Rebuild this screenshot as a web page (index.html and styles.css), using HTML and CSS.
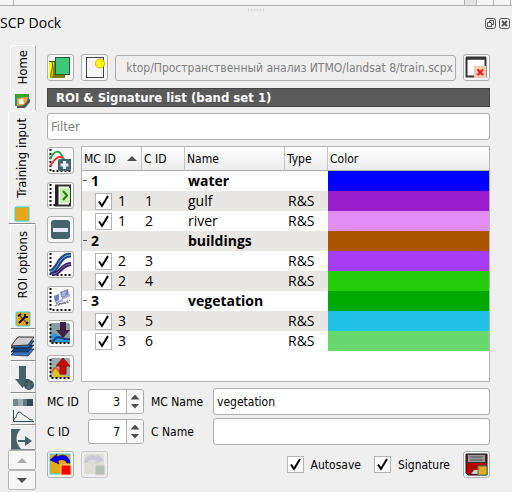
FILE: index.html
```html
<!DOCTYPE html>
<html lang="en">
<head>
<meta charset="utf-8">
<title>SCP Dock</title>
<link rel="stylesheet" href="styles.css">
</head>
<body>
<div class="strip"><span class="strip-left"></span><span class="strip-cell shade"></span><span class="strip-cell"></span><span class="strip-cell"></span></div>
<div class="grip">
  <svg width="16" height="2" viewBox="0 0 16 2"><path d="M0 1H16" stroke="#b4b4b4" stroke-width="1" stroke-dasharray="1 2"/></svg>
</div>
<header class="title">
  <h1>SCP Dock</h1>
  <button class="dock-btn" aria-label="Float"><svg width="11" height="11" viewBox="0 0 11 11" fill="none" stroke="#555"><rect x=".5" y=".5" width="10" height="10" rx="2"/><path d="M4.500 4V2.500H8.500V6.500H7M2.500 4.500H6.500V8.500H2.500Z"/></svg></button>
  <button class="dock-btn" aria-label="Close"><svg width="11" height="11" viewBox="0 0 11 11" fill="none" stroke="#555"><rect x=".5" y=".5" width="10" height="10" rx="2"/><path d="M3 3L8 8M8 3L3 8" stroke-width="2"/></svg></button>
</header>
<div class="dock">
  <nav class="tabs">
    <button class="tab home"><span class="tab-text">Home</span>
      <svg width="16" height="16" viewBox="0 0 16 16"><path d="M2 15V5L15 6V9L10 15Z" fill="#555"/><path d="M0 1H14V7H11L8 13H0Z" fill="#13997b"/><path d="M0 1H14V4H0Z" fill="#33a522"/><path d="M2 5L13 4L12 8L9 12L2 13Z" fill="#f3a33c"/><path d="M4 7L8 5L9 11H4Z" fill="#fff"/></svg></button>
    <button class="tab training"><span class="tab-text">Training input</span>
      <svg width="16" height="16" viewBox="0 0 16 16"><rect x="1" y="1" width="14" height="14" rx="1" fill="#e8a817" stroke="#30d0e0"/></svg></button>
    <button class="tab options"><span class="tab-text">ROI options</span>
      <svg width="16" height="16" viewBox="0 0 16 16"><rect x="1" y="1" width="14" height="14" rx="1" fill="#e8a817" stroke="#30d0e0"/><path d="M4 4L12 12" stroke="#555" stroke-width="1.500"/><path d="M11 5L4 12" stroke="#111" stroke-width="2"/><path d="M3 5L6 3M10 3V6H13M11 13L13 11" stroke="#111" stroke-width="2" fill="none"/></svg></button>
    <button class="tab short" aria-label="Band set">
      <svg width="24" height="24" viewBox="0 0 24 24"><path d="M0 21L6 15H23L17 22Z" fill="#3873c4" stroke="#123" stroke-width=".7"/><path d="M0 18L6 11H23L17 18Z" fill="#17457f" stroke="#123" stroke-width=".7"/><path d="M0 14L6 7H23L17 14Z" fill="#2a68b0" stroke="#123"/><path d="M0 12L6 4Q8 2 10 3H23L17 11Z" fill="#ccc" stroke="#333"/></svg></button>
    <button class="tab short" aria-label="Download">
      <svg width="24" height="24" viewBox="0 0 24 24"><path d="M8 0H15V13H19L11.500 22L4 13H8Z" fill="#46636a"/><circle cx="18" cy="19" r="5" fill="#3a5157"/><path d="M14 18H22M15 21H21M18 15V23" stroke="#5f7980"/></svg></button>
    <button class="tab short" aria-label="Spectral plot">
      <svg width="24" height="26" viewBox="0 0 24 26"><path d="M2 1H7V8H2Z" fill="#72898e"/><path d="M7 1H12V8H7Z" fill="#9aaeb2"/><path d="M12 1H16V8H12Z" fill="#61787e"/><path d="M16 1H22V8H16Z" fill="#334b52"/><path d="M2.500 12V23.500H23" stroke="#334b52" fill="none"/><path d="M3 21C6 21 5 14 8 14C11 14 11 17 14 18S17 22 22 22" stroke="#334b52" fill="none"/></svg></button>
    <button class="tab short last" aria-label="Export">
      <svg width="24" height="21" viewBox="0 0 24 21"><path d="M0 1H10C4 6 4 15 10 21H0Z" fill="#46636a"/><path d="M7 13H15" stroke="#46636a" stroke-width="2"/><path d="M14 8L21 13L14 18Z" fill="#46636a"/></svg></button>
    <button class="scroll" aria-label="Scroll up"><svg width="10" height="5" viewBox="0 0 10 5"><path d="M5 0L10 5H0Z" fill="#aaa"/></svg></button>
    <button class="scroll" aria-label="Scroll down"><svg width="10" height="5" viewBox="0 0 10 5"><path d="M5 5L10 0H0Z" fill="#505050"/></svg></button>
  </nav>
  <main class="panel">
    <div class="row file-row">
      <button class="tool" aria-label="Open training input"><svg width="23" height="23" viewBox="0 0 23 23"><path d="M0 6H16V22H0Z" fill="#7d7a00"/><path d="M0 6H5L3 22H0Z" fill="#ffff00"/><path d="M0 5.500H8M3 6C5 12 1 16 2 22" stroke="#4b4a00" fill="none"/><rect x="6.500" y="1.500" width="14" height="17" fill="#3cc878" stroke="#2c5540"/></svg></button>
      <button class="tool wide-gap" aria-label="New training input"><svg width="23" height="23" viewBox="0 0 23 23"><rect x="3.500" y="1.500" width="17" height="20" fill="#f5f5f5" stroke="#444"/><circle cx="17" cy="7.500" r="4.500" fill="#ffff00" stroke="#d0b400"/></svg></button>
      <input class="field path" type="text" aria-label="Training input" disabled value="ktop/Пространственный анализ ИТМО/landsat 8/train.scpx">
      <button class="tool" aria-label="Reset"><svg width="23" height="23" viewBox="0 0 23 23"><rect x="1.500" y="2.500" width="19" height="18" fill="#fff" stroke="#333" stroke-width="2"/><path d="M1 2H21" stroke="#333" stroke-width="3"/><rect x="9" y="10" width="12" height="12" fill="#efcbb0"/><path d="M12.500 13.500L18 19M18 13.500L12.500 19" stroke="#ff1020" stroke-width="2"/></svg></button>
    </div>
    <h2>ROI &amp; Signature list (band set 1)</h2>
    <input class="field filter" type="text" placeholder="Filter" aria-label="Filter">
    <div class="list">
      <div class="tools">
        <button class="tool" aria-label="Merge signatures"><svg width="23" height="23" viewBox="0 0 23 23"><path d="M1.500 0V22H22" fill="none" stroke="#111" stroke-width="2" stroke-dasharray="2 2"/><path d="M1 10C5 2 10 0 13 7S19 10 22 11" stroke="#35a045" stroke-width="2" fill="none"/><path d="M1 17C6 10 9 6 14 9" stroke="#e83434" stroke-width="2" fill="none"/><rect x="9" y="10" width="13" height="12" rx="2" fill="#46636a"/><path d="M15.500 12V20M11.500 16H19.500" stroke="#e9eefb" stroke-width="3"/></svg></button>
        <button class="tool" aria-label="Calculate"><svg width="23" height="23" viewBox="0 0 23 23"><path d="M1.500 0V21H8" fill="none" stroke="#111" stroke-width="2" stroke-dasharray="2 2"/><rect x="7" y="1.500" width="14" height="20" fill="#f5f5f5" stroke="#333" stroke-width="2"/><rect x="11" y="4" width="10" height="15" fill="#c8eeb0"/><path d="M8 1V22" stroke="#222" stroke-width="3"/><path d="M14 7L18 11.500L14 16" stroke="#2b7810" stroke-width="2" fill="none"/></svg></button>
        <button class="tool" aria-label="Delete"><svg width="23" height="23" viewBox="0 0 23 23"><rect x="2" y="2" width="19" height="19" rx="3" fill="#46636a"/><rect x="4" y="10" width="15" height="4" fill="#e6e8fa"/></svg></button>
        <button class="tool" aria-label="Signature plot"><svg width="23" height="23" viewBox="0 0 23 23"><path d="M1.500 0V22H22" fill="none" stroke="#111" stroke-width="2" stroke-dasharray="2 2"/><path d="M1 19C10 17 9 2 22 2" stroke="#1d4a86" stroke-width="5" fill="none"/><path d="M1 19C10 17 9 2 22 2" stroke="#82b4d8" fill="none"/><path d="M3 21C12 21 11 12 22 11" stroke="#321a6b" stroke-width="4" fill="none"/><path d="M3 21C12 21 11 12 22 11" stroke="#8a78b8" fill="none"/></svg></button>
        <button class="tool" aria-label="Scatter plot"><svg width="23" height="23" viewBox="0 0 23 23"><path d="M1.500 0V22H22" fill="none" stroke="#111" stroke-width="2" stroke-dasharray="2 2"/><path d="M5 8L10 6V12L6 14Z" fill="#6b7ec0"/><path d="M11 4L19 1L20 8L13 11Z" fill="#7d83bf"/><path d="M13 4L17 3L16 8H13Z" fill="#a9b3e4"/><path d="M7 15L14 12M14 10L21 7" stroke="#a3a9d6" stroke-width="2"/><path d="M6 18L21 12M9 17L20 14M7 16L17 15" stroke="#6a6a78" stroke-dasharray="2 1"/></svg></button>
        <button class="tool" aria-label="Import signatures"><svg width="23" height="23" viewBox="0 0 23 23"><rect x="1" y="1" width="20" height="20" rx="2" fill="#879fa3"/><path d="M1.500 2V21H22" fill="none" stroke="#111" stroke-width="2" stroke-dasharray="2 2"/><path d="M3 20V13C6 8 8 15 11 14S16 18 21 19V20Z" fill="#2499dd"/><path d="M4 20C9 10 12 19 21 17" stroke="#163f80" stroke-width="2" fill="none"/><path d="M11 0H17V8H21L14 16L7 8H11Z" fill="#442044"/></svg></button>
        <button class="tool" aria-label="Export signatures"><svg width="23" height="23" viewBox="0 0 23 23"><rect x="1" y="1" width="20" height="20" rx="2" fill="#9aaaad"/><path d="M1.500 2V21H22" fill="none" stroke="#111" stroke-width="2" stroke-dasharray="2 2"/><path d="M3 20C5 9 8 13 10 16S17 19 21 20Z" fill="#dcc227"/><path d="M3 15C6 7 10 13 12 18" stroke="#f05a22" stroke-width="2" fill="none"/><path d="M14 1L21 9H17V17H11V9H7Z" fill="#c80b08" stroke="#851414"/></svg></button>
      </div>
      <div class="tree">
        <table>
          <colgroup><col class="c-mc"><col class="c-id"><col class="c-name"><col class="c-type"><col></colgroup>
          <thead><tr><th>MC ID<svg class="sort" width="10" height="5" viewBox="0 0 10 5"><path d="M5 0L10 5H0Z" fill="#505050"/></svg></th><th>C ID</th><th>Name</th><th>Type</th><th>Color</th></tr></thead>
          <tbody>
            <tr class="group"><td><i></i>1</td><td></td><td>water</td><td></td><td class="blue"></td></tr>
            <tr><td><label><input type="checkbox" checked>1</label></td><td>1</td><td>gulf</td><td>R&amp;S</td><td class="purple"></td></tr>
            <tr><td><label><input type="checkbox" checked>1</label></td><td>2</td><td>river</td><td>R&amp;S</td><td class="pink"></td></tr>
            <tr class="group"><td><i></i>2</td><td></td><td>buildings</td><td></td><td class="brown"></td></tr>
            <tr><td><label><input type="checkbox" checked>2</label></td><td>3</td><td></td><td>R&amp;S</td><td class="violet"></td></tr>
            <tr><td><label><input type="checkbox" checked>2</label></td><td>4</td><td></td><td>R&amp;S</td><td class="lime"></td></tr>
            <tr class="group"><td><i></i>3</td><td></td><td>vegetation</td><td></td><td class="green"></td></tr>
            <tr><td><label><input type="checkbox" checked>3</label></td><td>5</td><td></td><td>R&amp;S</td><td class="cyan"></td></tr>
            <tr><td><label><input type="checkbox" checked>3</label></td><td>6</td><td></td><td>R&amp;S</td><td class="mint"></td></tr>
          </tbody>
        </table>
      </div>
    </div>
    <div class="form">
      <label for="mc">MC ID</label>
      <div class="spin"><input id="mc" type="number" value="3"><span class="steps"><button aria-label="Increase MC ID"></button><button class="down" aria-label="Decrease MC ID"></button></span></div>
      <label for="mcname">MC Name</label>
      <input class="field" id="mcname" type="text" value="vegetation">
      <label for="cid">C ID</label>
      <div class="spin"><input id="cid" type="number" value="7"><span class="steps"><button aria-label="Increase C ID"></button><button class="down" aria-label="Decrease C ID"></button></span></div>
      <label for="cname">C Name</label>
      <input class="field" id="cname" type="text">
    </div>
    <div class="row foot">
      <button class="tool" aria-label="Undo"><svg width="23" height="23" viewBox="0 0 23 23"><rect x="1" y="1" width="20" height="20" fill="#e8a817" stroke="#30d0e0"/><path d="M1 7L8 1V4C15 0 20 3 21 10H18C16 6 12 6 9 8L10 11Z" fill="#0000fa" stroke="#10104a" stroke-width=".6"/><rect x="12" y="12" width="10" height="10" fill="#f00" stroke="#ffd080"/></svg></button>
      <button class="tool off" disabled aria-label="Redo"><svg width="23" height="23" viewBox="0 0 23 23"><rect x="1" y="1" width="20" height="20" fill="#dddcd5"/><path d="M21 7L14 1V4C7 0 2 3 1 10H4C6 6 10 6 13 8L12 11Z" fill="#c9c9d5"/><rect x="12" y="12" width="10" height="10" fill="#b4bfb6" stroke="#e4e4e0"/></svg></button>
      <label class="check push"><input type="checkbox" checked>Autosave</label>
      <label class="check"><input type="checkbox" checked>Signature</label>
      <button class="tool" aria-label="Save ROI"><svg width="23" height="23" viewBox="0 0 23 23"><path d="M1 1H22V22H3L1 20Z" fill="#b00000" stroke="#111"/><rect x="2.500" y="1.500" width="18" height="8" fill="#999" stroke="#333"/><path d="M5 4H18M5 7H18" stroke="#555"/><path d="M6 21L9 17H14V21Z" fill="#ccc"/><rect x="13" y="13" width="9" height="9" fill="#e8a817" stroke="#308080"/></svg></button>
    </div>
  </main>
</div>
</body>
</html>
```

FILE: styles.css
```css
* { box-sizing: border-box; }
body {
  margin: 0;
  background: #efefef;
  color: #000;
  font: 12px/16px "DejaVu Sans Condensed", "DejaVu Sans", sans-serif;
}
button, input { font: inherit; color: inherit; margin: 0; padding: 0; }
button { border: 0; background: none; }
svg { display: block; flex: none; }

.strip { display: flex; height: 6px; background: #f5f5f5; border-bottom: 1px solid #b2b2b2; padding-right: 1px; }
.strip-left { width: 14px; border-right: 1px solid #b2b2b2; margin-right: auto; }
.strip-cell { width: 17px; border-right: 1px solid #b2b2b2; }
.strip-cell.shade { width: 13px; background: #e3e3e3; border-left: 1px solid #b2b2b2; }
.grip { display: flex; justify-content: center; padding: 3px 0 4px; }
.title { display: flex; align-items: center; gap: 3px; height: 16px; padding-right: 2px; }
h1 { flex: 1; margin: 0; font: 14px/16px "Open Sans", "Noto Sans", sans-serif; }
.dock-btn { width: 11px; height: 11px; }

.dock { display: flex; align-items: flex-start; padding: 14px 22px 0 7px; }
.tabs { flex: none; display: flex; flex-direction: column; align-items: flex-end; width: 29px; }
.tab {
  display: flex; flex-direction: column; align-items: center; justify-content: flex-end; gap: 8px;
  width: 26px; padding-bottom: 1px; overflow: hidden;
  border: solid #fff; border-width: 1px 0 0 1px;
  border-right: 1px solid #b0b0b0; border-bottom: 1px solid #8c8c8c;
  border-top-left-radius: 3px;
  font: 13px/16px "DejaVu Sans Condensed", "DejaVu Sans", sans-serif;
}
.tab-text { writing-mode: vertical-rl; transform: rotate(180deg); white-space: nowrap; }
.home { height: 66px; border-bottom-color: #fff; }
.training { width: 28px; height: 113px; border-right-color: #efefef; }
.options { height: 105px; gap: 12px; }
.short { height: 32px; padding: 4px 0 0; justify-content: flex-start; }
.short.last { height: 25px; padding-top: 2px; }
.scroll {
  display: flex; align-items: center; justify-content: center;
  width: 28px; height: 20px; background: #f6f6f6;
  border: 1px solid #b4b4b4; border-radius: 2px;
}

.panel { flex: 1; min-width: 0; margin-left: 11px; padding-top: 9px; }
.row { display: flex; align-items: center; gap: 7px; }
.tool {
  flex: none; display: flex; align-items: center; justify-content: center;
  width: 27px; height: 27px; background: #f8f8f8;
  border: 1px solid #b0b0b0; border-radius: 3px;
}
.tool.off { border-color: #c8c8c8; background: #efefef; }
.field {
  width: 100%; min-width: 0; height: 27px; padding: 0 3px;
  background: #fff; border: 1px solid #adadad; border-radius: 3px;
}
.path { flex: 1; height: 26px; padding: 0 2px 0 0; background: #efefef; color: #808080; text-align: right; }
.file-row .wide-gap { margin-right: 0; }
.file-row .tool:nth-child(2) { margin-left: 0; }
h2 {
  margin: 7px 0 6px; padding: 0 8px; height: 19px;
  background: #5a5a5a; border: 1px solid #444; color: #fff;
  font: bold 13px/17px "DejaVu Sans Condensed", "DejaVu Sans", sans-serif;
}
.filter { display: block; font-size: 13px; }
.filter::placeholder { color: #808080; opacity: 1; }

.list { display: flex; gap: 7px; margin-top: 6px; }
.tools { display: flex; flex-direction: column; justify-content: space-between; padding-top: 1px; }
.tree { flex: 1; min-width: 0; min-height: 236px; background: #fff; border: 1px solid #b4b4b4; }
table { width: 100%; table-layout: fixed; border-collapse: separate; border-spacing: 0; }
.c-mc { width: 60px; }
.c-id { width: 43px; }
.c-name { width: 100px; }
.c-type { width: 43px; }
th {
  height: 24px; padding: 0 2px; text-align: left; font-weight: normal;
  background: linear-gradient(#fff, #ececec);
  border-right: 1px solid #c4c4c4; border-bottom: 1px solid #aaa;
}
th:last-child { border-right: 0; }
.sort { float: right; margin: 5px 2px 0 0; }
td { height: 20px; padding: 0 3px; font: 14px/20px "Open Sans", "Noto Sans", sans-serif; white-space: nowrap; }
td:first-child { padding-left: 0; }
td label { display: flex; align-items: center; gap: 6px; padding-left: 13px; }
tbody tr:nth-child(even) { background: #e8e7e3; }
.group td { font-weight: bold; }
.group i { display: inline-block; width: 4px; height: 1px; margin: 0 4px 3px 1px; background: #555; vertical-align: middle; }
.blue { background: #0000ff; }
.purple { background: #981ccb; }
.pink { background: #e28df5; }
.brown { background: #aa5500; }
.violet { background: #a63df5; }
.lime { background: #25cc0b; }
.green { background: #00aa00; }
.cyan { background: #20c1e5; }
.mint { background: #68d96e; }

input[type="checkbox"] {
  appearance: none; flex: none; width: 17px; height: 17px; border: 1px solid #b4b4b4;
  background: #fff url("data:image/svg+xml,%3Csvg xmlns='http://www.w3.org/2000/svg' viewBox='0 0 15 15'%3E%3Cpath d='M3 7.500L6 12L12 2' fill='none' stroke='black' stroke-width='2'/%3E%3C/svg%3E") center / 15px 15px no-repeat;
}

.form {
  display: grid; grid-template-columns: 41px 56px 69px 1fr; align-items: center;
  row-gap: 3px; margin-top: 6px;
}
.form label:nth-of-type(even) { padding-left: 7px; }
.spin { display: flex; height: 25px; border: 1px solid #adadad; border-radius: 3px; background: #fff; overflow: hidden; }
.spin input { flex: 1; min-width: 0; border: 0; background: none; text-align: right; padding-right: 6px; appearance: textfield; }
.spin input::-webkit-inner-spin-button { appearance: none; margin: 0; }
.steps { width: 17px; display: flex; flex-direction: column; justify-content: center; align-items: center; gap: 4px; border-left: 1px solid #b4b4b4; background: #f8f8f8; }
.steps button { width: 9px; height: 5px; background: #505050; clip-path: polygon(50% 0, 100% 100%, 0 100%); }
.steps .down { clip-path: polygon(0 0, 100% 0, 50% 100%); }
.foot { margin-top: 6px; }
.check { display: flex; align-items: center; gap: 7px; }
.push { margin-left: auto; }
.foot .check { margin-right: 6px; }
```
